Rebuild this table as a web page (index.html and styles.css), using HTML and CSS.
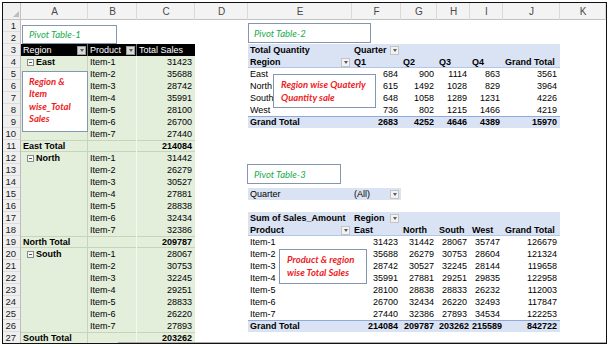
FILE: index.html
```html
<!DOCTYPE html>
<html>
<head>
<meta charset="utf-8">
<title>Pivot Tables</title>
<link rel="stylesheet" href="styles.css">
</head>
<body>
<div class="sheet">
  <table class="grid">
    <colgroup>
      <col class="c-rh"><col class="c-a"><col class="c-b"><col class="c-c"><col class="c-d"><col class="c-e">
      <col class="c-f"><col class="c-g"><col class="c-h"><col class="c-i"><col class="c-j"><col class="c-k">
    </colgroup>
    <tr class="hdr">
      <td class="corner"></td><td>A</td><td>B</td><td>C</td><td>D</td><td>E</td><td>F</td><td>G</td><td>H</td><td>I</td><td>J</td><td>K</td>
    </tr>
    <tr><td class="rh">1</td><td colspan="11"></td></tr>
    <tr><td class="rh">2</td><td colspan="11"></td></tr>
    <tr>
      <td class="rh">3</td>
      <td class="k ka"><div class="hd"><span>Region</span><i class="dd"></i></div></td>
      <td class="k ka"><div class="hd"><span>Product</span><i class="dd"></i></div></td>
      <td class="k">Total Sales</td>
      <td></td>
      <td class="bl bold">Total Quantity</td>
      <td class="bl bold"><div class="hd"><span>Quarter</span><i class="dd"></i></div></td>
      <td class="bl"></td><td class="bl"></td><td class="bl"></td><td class="bl"></td>
      <td></td>
    </tr>
    <tr>
      <td class="rh">4</td>
      <td class="g ga bold grp"><i class="mi"></i>East</td>
      <td class="g gb">Item-1</td><td class="g n">31423</td>
      <td></td>
      <td class="bl bh bold"><div class="hd"><span>Region</span><i class="dd"></i></div></td>
      <td class="bl bh bold">Q1</td><td class="bl bh bold">Q2</td><td class="bl bh bold">Q3</td><td class="bl bh bold">Q4</td><td class="bl bh bold">Grand Total</td>
      <td></td>
    </tr>
    <tr>
      <td class="rh">5</td>
      <td class="g ga"></td><td class="g gb">Item-2</td><td class="g n">35688</td>
      <td></td>
      <td>East</td><td class="n">684</td><td class="n">900</td><td class="n">1114</td><td class="n">863</td><td class="n">3561</td>
      <td></td>
    </tr>
    <tr>
      <td class="rh">6</td>
      <td class="g ga"></td><td class="g gb">Item-3</td><td class="g n">28742</td>
      <td></td>
      <td>North</td><td class="n">615</td><td class="n">1492</td><td class="n">1028</td><td class="n">829</td><td class="n">3964</td>
      <td></td>
    </tr>
    <tr>
      <td class="rh">7</td>
      <td class="g ga"></td><td class="g gb">Item-4</td><td class="g n">35991</td>
      <td></td>
      <td>South</td><td class="n">648</td><td class="n">1058</td><td class="n">1289</td><td class="n">1231</td><td class="n">4226</td>
      <td></td>
    </tr>
    <tr>
      <td class="rh">8</td>
      <td class="g ga"></td><td class="g gb">Item-5</td><td class="g n">28100</td>
      <td></td>
      <td>West</td><td class="n">736</td><td class="n">802</td><td class="n">1215</td><td class="n">1466</td><td class="n">4219</td>
      <td></td>
    </tr>
    <tr>
      <td class="rh">9</td>
      <td class="g ga"></td><td class="g gb">Item-6</td><td class="g n">26700</td>
      <td></td>
      <td class="bl bt bold">Grand Total</td><td class="bl bt bold n">2683</td><td class="bl bt bold n">4252</td><td class="bl bt bold n">4646</td><td class="bl bt bold n">4389</td><td class="bl bt bold n">15970</td>
      <td></td>
    </tr>
    <tr>
      <td class="rh">10</td>
      <td class="g ga"></td><td class="g gb">Item-7</td><td class="g n">27440</td>
      <td colspan="8"></td>
    </tr>
    <tr>
      <td class="rh">11</td>
      <td class="g ga tot bold">East Total</td><td class="g gb tot"></td><td class="g tot n bold">214084</td>
      <td colspan="8"></td>
    </tr>
    <tr>
      <td class="rh">12</td>
      <td class="g ga bold grp"><i class="mi"></i>North</td><td class="g gb">Item-1</td><td class="g n">31442</td>
      <td colspan="8"></td>
    </tr>
    <tr>
      <td class="rh">13</td>
      <td class="g ga"></td><td class="g gb">Item-2</td><td class="g n">26279</td>
      <td colspan="8"></td>
    </tr>
    <tr>
      <td class="rh">14</td>
      <td class="g ga"></td><td class="g gb">Item-3</td><td class="g n">30527</td>
      <td colspan="8"></td>
    </tr>
    <tr>
      <td class="rh">15</td>
      <td class="g ga"></td><td class="g gb">Item-4</td><td class="g n">27881</td>
      <td></td>
      <td class="bl">Quarter</td>
      <td class="bl"><div class="hd"><span>(All)</span><i class="dd"></i></div></td>
      <td colspan="5"></td>
    </tr>
    <tr>
      <td class="rh">16</td>
      <td class="g ga"></td><td class="g gb">Item-5</td><td class="g n">28838</td>
      <td colspan="8"></td>
    </tr>
    <tr>
      <td class="rh">17</td>
      <td class="g ga"></td><td class="g gb">Item-6</td><td class="g n">32434</td>
      <td></td>
      <td class="bl bold">Sum of Sales_Amount</td>
      <td class="bl bold"><div class="hd"><span>Region</span><i class="dd"></i></div></td>
      <td class="bl"></td><td class="bl"></td><td class="bl"></td><td class="bl"></td>
      <td></td>
    </tr>
    <tr>
      <td class="rh">18</td>
      <td class="g ga"></td><td class="g gb">Item-7</td><td class="g n">32386</td>
      <td></td>
      <td class="bl bh bold"><div class="hd"><span>Product</span><i class="dd"></i></div></td>
      <td class="bl bh bold">East</td><td class="bl bh bold">North</td><td class="bl bh bold">South</td><td class="bl bh bold">West</td><td class="bl bh bold">Grand Total</td>
      <td></td>
    </tr>
    <tr>
      <td class="rh">19</td>
      <td class="g ga tot bold">North Total</td><td class="g gb tot"></td><td class="g tot n bold">209787</td>
      <td></td>
      <td>Item-1</td><td class="n">31423</td><td class="n">31442</td><td class="n">28067</td><td class="n">35747</td><td class="n">126679</td>
      <td></td>
    </tr>
    <tr>
      <td class="rh">20</td>
      <td class="g ga bold grp"><i class="mi"></i>South</td><td class="g gb">Item-1</td><td class="g n">28067</td>
      <td></td>
      <td>Item-2</td><td class="n">35688</td><td class="n">26279</td><td class="n">30753</td><td class="n">28604</td><td class="n">121324</td>
      <td></td>
    </tr>
    <tr>
      <td class="rh">21</td>
      <td class="g ga"></td><td class="g gb">Item-2</td><td class="g n">30753</td>
      <td></td>
      <td>Item-3</td><td class="n">28742</td><td class="n">30527</td><td class="n">32245</td><td class="n">28144</td><td class="n">119658</td>
      <td></td>
    </tr>
    <tr>
      <td class="rh">22</td>
      <td class="g ga"></td><td class="g gb">Item-3</td><td class="g n">32245</td>
      <td></td>
      <td>Item-4</td><td class="n">35991</td><td class="n">27881</td><td class="n">29251</td><td class="n">29835</td><td class="n">122958</td>
      <td></td>
    </tr>
    <tr>
      <td class="rh">23</td>
      <td class="g ga"></td><td class="g gb">Item-4</td><td class="g n">29251</td>
      <td></td>
      <td>Item-5</td><td class="n">28100</td><td class="n">28838</td><td class="n">28833</td><td class="n">26232</td><td class="n">112003</td>
      <td></td>
    </tr>
    <tr>
      <td class="rh">24</td>
      <td class="g ga"></td><td class="g gb">Item-5</td><td class="g n">28833</td>
      <td></td>
      <td>Item-6</td><td class="n">26700</td><td class="n">32434</td><td class="n">26220</td><td class="n">32493</td><td class="n">117847</td>
      <td></td>
    </tr>
    <tr>
      <td class="rh">25</td>
      <td class="g ga"></td><td class="g gb">Item-6</td><td class="g n">26220</td>
      <td></td>
      <td>Item-7</td><td class="n">27440</td><td class="n">32386</td><td class="n">27893</td><td class="n">34534</td><td class="n">122253</td>
      <td></td>
    </tr>
    <tr>
      <td class="rh">26</td>
      <td class="g ga"></td><td class="g gb">Item-7</td><td class="g n">27893</td>
      <td></td>
      <td class="bl bt bold">Grand Total</td><td class="bl bt bold n">214084</td><td class="bl bt bold n">209787</td><td class="bl bt bold n">203262</td><td class="bl bt bold n">215589</td><td class="bl bt bold n">842722</td>
      <td></td>
    </tr>
    <tr>
      <td class="rh">27</td>
      <td class="g ga tot bold">South Total</td><td class="g gb tot"></td><td class="g tot n bold">203262</td>
      <td colspan="8"></td>
    </tr>
  </table>

  <div class="tb green tb1">Pivot Table-1</div>
  <div class="tb red tb2">Region &amp;<br>Item<br>wise_Total<br>Sales</div>
  <div class="tb green tb3">Pivot Table-2</div>
  <div class="tb red tb4">Region wise Quaterly<br>Quantity sale</div>
  <div class="tb green tb5">Pivot Table-3</div>
  <div class="tb red tb6">Product &amp; region<br>wise Total Sales</div>
</div>
</body>
</html>
```
FILE: styles.css
```css
* { box-sizing: border-box; }
html, body { margin: 0; background: #fff; }
body {
  font-family: "Liberation Sans", Arial, sans-serif;
  font-size: 9px;
  color: #000;
}

.sheet {
  position: relative;
  margin: 2px 0 0 2px;
  width: 605px;
  height: 342px;
  border: 1px solid #111;
  overflow: hidden;
}
.sheet::after {
  content: "";
  position: absolute;
  left: 115px;
  right: 0;
  bottom: -1px;
  height: 2px;
  background: #ababab;
}

.grid {
  table-layout: fixed;
  width: 603px;
  border-collapse: separate;
  border-spacing: 0;
}
.c-rh { width: 18px; }
.c-a { width: 67px; }
.c-b { width: 49px; }
.c-c { width: 58px; }
.c-d { width: 53px; }
.c-e { width: 104px; }
.c-f { width: 49px; }
.c-g { width: 36px; }
.c-h { width: 33px; }
.c-i { width: 33px; }
.c-j { width: 57px; }
.c-k { width: 46px; }

.grid tr { height: 12px; }
.grid td {
  padding: 0 2px;
  height: 12px;
  line-height: 12px;
  white-space: nowrap;
  overflow: hidden;
  vertical-align: middle;
}

/* column header row */
.grid tr.hdr { height: 17px; }
.hdr td {
  height: 17px;
  line-height: 17px;
  background: #f3f3f3;
  color: #4a4a4a;
  text-align: center;
  font-size: 10px;
  box-shadow: inset -1px 0 0 #dadada, inset 0 -1px 0 #c2c2c2;
}
.hdr td.corner { position: relative; background: #f0f0f0; box-shadow: inset -1px 0 0 #c2c2c2, inset 0 -1px 0 #c2c2c2; }
.corner::after {
  content: "";
  position: absolute;
  right: 2px;
  bottom: 3px;
  border-left: 6px solid transparent;
  border-bottom: 6px solid #bdbdbd;
}

/* row headers */
.grid td.rh {
  background: #efefef;
  color: #222;
  text-align: right;
  font-size: 9.5px;
  padding: 0 5px 0 0;
  box-shadow: inset -1px 0 0 #bdbdbd, inset 0 -1px 0 #dcdcdc;
}

.bold { font-weight: 700; }
.grid td.n { text-align: right; padding-right: 3px; }

/* pivot 1 (green / black header) */
.k { background: #000; color: #fff; }
.ka { box-shadow: inset -1px 0 0 #6e6e6e; }
.g { background: #e3eedb; }
.ga { box-shadow: inset -1px 0 0 #c6d5b9; }
.gb { box-shadow: inset -1px 0 0 #f4f8f0; }
.g.tot { box-shadow: inset 0 1px 0 #c6d5b9, inset 0 -1px 0 #c6d5b9; }
.ga.tot { box-shadow: inset -1px 0 0 #c6d5b9, inset 0 1px 0 #c6d5b9, inset 0 -1px 0 #c6d5b9; }
.gb.tot { box-shadow: inset -1px 0 0 #f4f8f0, inset 0 1px 0 #c6d5b9, inset 0 -1px 0 #c6d5b9; }
.grid td.grp { padding-left: 6px; }

.mi {
  display: inline-block;
  position: relative;
  width: 7px;
  height: 7px;
  margin-right: 2px;
  vertical-align: -0.5px;
  border: 1px solid #8a8a8a;
  background: #f7f7f7;
}
.mi::after {
  content: "";
  position: absolute;
  left: 1px;
  top: 2px;
  width: 3px;
  height: 1px;
  background: #555;
}

/* pivot 2 & 3 (blue) */
.bl { background: #dae3f3; }
.bh { box-shadow: inset 0 -1px 0 #b4c6e7; }
.bt { box-shadow: inset 0 1px 0 #8ea9db; }

/* header with dropdown */
.hd {
  display: flex;
  align-items: center;
  justify-content: space-between;
}
.dd {
  position: relative;
  flex: none;
  width: 9px;
  height: 9px;
  background: #f2f2f2;
  border: 1px solid #c4c4c4;
}
.dd::after {
  content: "";
  position: absolute;
  left: 1.5px;
  top: 2.5px;
  border-left: 2.5px solid transparent;
  border-right: 2.5px solid transparent;
  border-top: 3px solid #5a5a5a;
}
.k .dd { background: #d9d9d9; border-color: #9a9a9a; }

/* text boxes */
.tb {
  position: absolute;
  background: #fff;
  border: 1px solid #8497b0;
  font-family: Lato, "Liberation Sans", sans-serif;
  font-style: italic;
  white-space: nowrap;
}
.tb.green {
  color: #14ab4c;
  font-size: 9.5px;
  display: flex;
  align-items: center;
}
.tb.red {
  color: #ee1b24;
  font-weight: 700;
  font-size: 9.5px;
  line-height: 13px;
}
.tb1 { left: 19px; top: 22px; width: 95px; height: 19px; padding-left: 6px; }
.tb2 { left: 19px; top: 68px; width: 66px; height: 61px; padding: 4px 0 0 6px; line-height: 12.3px !important; }
.tb3 { left: 245px; top: 20px; width: 123px; height: 20px; padding-left: 5px; }
.tb4 { left: 270px; top: 71px; width: 103px; height: 34px; padding: 3px 0 0 7px; }
.tb5 { left: 244px; top: 161px; width: 94px; height: 20px; padding-left: 6px; }
.tb6 { left: 276px; top: 246px; width: 88px; height: 35px; padding: 3px 0 0 7px; }
```
